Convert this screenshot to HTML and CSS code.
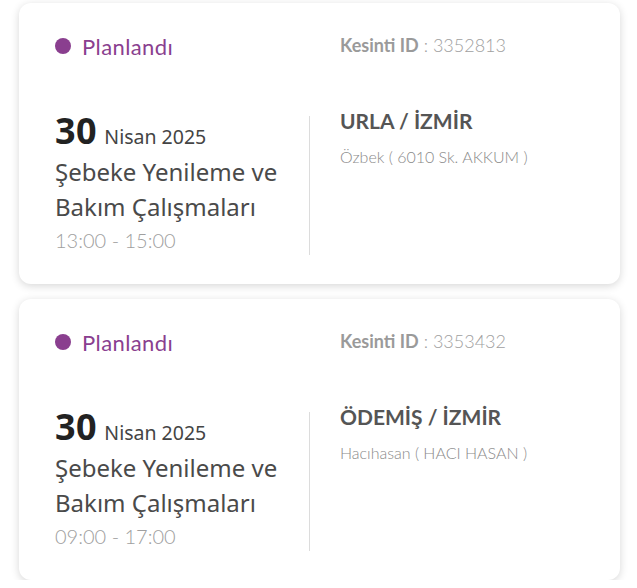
FILE: index.html
```html
<!DOCTYPE html>
<html lang="tr">
<head>
<meta charset="utf-8">
<link rel="stylesheet" href="styles.css">
</head>
<body>
<div class="list">
  <div class="card">
    <div class="head">
      <div class="status"><span class="dot"></span><span class="status-text">Planlandı</span></div>
      <div class="outage-id"><b>Kesinti ID</b> : 3352813</div>
    </div>
    <div class="body">
      <div class="info">
        <div class="date"><span class="day">30</span> <span class="month">Nisan 2025</span></div>
        <div class="title">Şebeke Yenileme ve Bakım Çalışmaları</div>
        <div class="time">13:00 - 15:00</div>
      </div>
      <div class="place">
        <div class="city">URLA / İZMİR</div>
        <div class="street">Özbek ( 6010 Sk. AKKUM )</div>
      </div>
    </div>
  </div>
  <div class="card">
    <div class="head">
      <div class="status"><span class="dot"></span><span class="status-text">Planlandı</span></div>
      <div class="outage-id"><b>Kesinti ID</b> : 3353432</div>
    </div>
    <div class="body">
      <div class="info">
        <div class="date"><span class="day">30</span> <span class="month">Nisan 2025</span></div>
        <div class="title">Şebeke Yenileme ve Bakım Çalışmaları</div>
        <div class="time">09:00 - 17:00</div>
      </div>
      <div class="place">
        <div class="city">ÖDEMİŞ / İZMİR</div>
        <div class="street">Hacıhasan ( HACI HASAN )</div>
      </div>
    </div>
  </div>
</div>
</body>
</html>
```
FILE: styles.css
```css
html, body {
  margin: 0;
  padding: 0;
  background: #ffffff;
}
.list {
  display: flex;
  flex-direction: column;
  gap: 15px;
  padding: 3px 17px 0 19px;
}
.card {
  width: 601px;
  height: 281px;
  box-sizing: border-box;
  background: #fff;
  border-radius: 12px;
  box-shadow: 0 2px 8px rgba(0, 0, 0, 0.16);
  padding: 30px 36px 0 36px;
}
.head {
  display: flex;
  align-items: center;
  height: 26px;
}
.status {
  width: 285px;
  display: flex;
  align-items: center;
  gap: 11px;
}
.dot {
  width: 16px;
  height: 16px;
  border-radius: 50%;
  background: #8a3f8f;
}
.status-text {
  font-family: "Lato", sans-serif;
  font-size: 22px;
  letter-spacing: 0.4px;
  color: #8a3f8f;
}
.outage-id {
  font-family: "Lato", sans-serif;
  font-size: 18px;
  font-weight: 300;
  color: #a0a0a0;
  margin-top: -2px;
}
.outage-id b {
  color: #9a9a9a;
  font-weight: 700;
}
.body {
  display: flex;
  margin-top: 57px;
}
.info {
  width: 254px;
  height: 139px;
  border-right: 1px solid #dcdcdc;
  font-family: "Noto Sans", sans-serif;
  color: #444;
}
.date {
  line-height: 30px;
}
.day {
  font-size: 36px;
  font-weight: 700;
  letter-spacing: 0.5px;
  color: #222;
}
.month {
  font-size: 19.5px;
  margin-left: 3px;
  color: #444;
}
.title {
  font-size: 24px;
  line-height: 35px;
  margin-top: 1px;
  color: #4a4a4a;
}
.time {
  font-family: "Lato", sans-serif;
  font-size: 20px;
  font-weight: 300;
  color: #a0a0a0;
  line-height: 28px;
  margin-top: 2px;
}
.place {
  padding-left: 30px;
  font-family: "Lato", sans-serif;
}
.city {
  font-size: 21px;
  font-weight: 700;
  color: #555;
  line-height: 28px;
  margin-top: -9px;
}
.street {
  font-size: 16px;
  font-weight: 300;
  color: #8a8a8a;
  margin-top: 12px;
}
```
